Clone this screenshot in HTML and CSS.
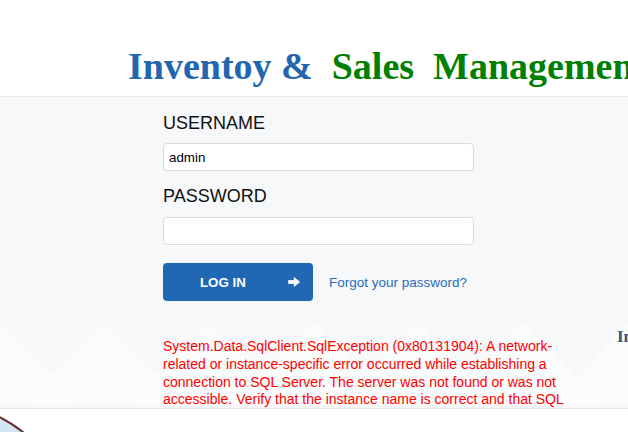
FILE: index.html
```html
<!DOCTYPE html>
<html lang="en">
<head>
<meta charset="utf-8">
<title>Inventoy &amp; Sales Management</title>
<link rel="stylesheet" href="styles.css">
</head>
<body>
<header class="site-header">
  <h1 class="site-title"><span class="title-blue">Inventoy &amp;</span><span class="title-green">Sales&nbsp; Management System</span></h1>
</header>
<main class="main">
  <section class="login-col">
    <form class="login-form">
      <label class="field-label" for="user">USERNAME</label>
      <input class="field-input" id="user" type="text" value="admin">
      <label class="field-label field-label-2" for="pass">PASSWORD</label>
      <input class="field-input" id="pass" type="password">
      <div class="actions">
        <button class="btn-login" type="button"><span>LOG IN</span>
          <svg class="btn-arrow" viewBox="0 0 12 10" width="12" height="10" aria-hidden="true"><path d="M0.5 3.6H6.2V0.6L11.6 5L6.2 9.4V6.4H0.5Z" fill="#fff" stroke="#fff" stroke-width="0.8" stroke-linejoin="round"/></svg>
        </button>
        <a class="forgot" href="#">Forgot your password?</a>
      </div>
    </form>
    <p class="error-msg">System.Data.SqlClient.SqlException (0x80131904): A network-related or instance-specific error occurred while establishing a connection to SQL Server. The server was not found or was not accessible. Verify that the instance name is correct and that SQL Server is configured to allow remote connections. (provider: Named Pipes Provider, error: 40 - Could not open a connection to SQL Server)</p>
  </section>
  <aside class="side-col">
    <p class="side-title">Inventory &amp; Sales Management</p>
  </aside>
</main>
<footer class="site-footer">
  <svg class="footer-logo" viewBox="0 0 40 24" width="40" height="24" aria-hidden="true">
    <path d="M0 9.5 Q11 15 23 24 L0 24 Z" fill="#d4e6f2"/>
    <path d="M-1 9 Q11 14.8 23.5 24.5" fill="none" stroke="#6a2b2b" stroke-width="2"/>
  </svg>
</footer>
</body>
</html>
```
FILE: styles.css
```css
html, body {
  margin: 0;
  padding: 0;
  overflow: hidden;
  height: 100%;
}
body {
  font-family: "Liberation Sans", Arial, sans-serif;
  background: #f7f8fa;
}
.site-header {
  box-sizing: border-box;
  height: 97px;
  padding: 45px 0 0 128px;
  background: #fff;
  border-bottom: 1px solid #e6e8eb;
  white-space: nowrap;
  overflow: hidden;
}
.site-title {
  margin: 0;
  font-family: "Liberation Serif", "Times New Roman", serif;
  font-weight: bold;
  font-size: 38px;
  line-height: 42px;
}
.title-blue { color: #2266b0; }
.title-green { color: #008000; margin-left: 19px; }

.main {
  display: flex;
  padding: 16px 0 0 163px;
  min-height: 400px;
  background-color: #f7f8fa;
  background-image: url("data:image/svg+xml,%3Csvg xmlns='http://www.w3.org/2000/svg' width='104.5' height='200' viewBox='0 0 104.5 200'%3E%3Cpath d='M0 0 L52.25 52 L104.5 0 L104.5 200 L0 200 Z' fill='%23fafbfb'/%3E%3Cpath d='M52.25 52 L104.5 104.25 L104.5 200 L0 200 L0 104.25 Z' fill='%23fbfcfb'/%3E%3C/svg%3E");
  background-repeat: repeat-x;
  background-position: 0.5px 226px;
}
.login-col {
  width: 410px;
  flex: 0 0 410px;
}
.login-form {
  display: flex;
  flex-direction: column;
  width: 311px;
}
.field-label {
  font-size: 18px;
  line-height: 21px;
  color: #111;
  margin-bottom: 9px;
}
.field-label-2 {
  margin-top: 15px;
  margin-bottom: 10px;
}
.field-input {
  box-sizing: border-box;
  height: 28px;
  width: 311px;
  margin: 0;
  padding: 0 5px;
  border: 1px solid #d9dcdf;
  border-radius: 4px;
  background: #fff;
  font-family: "Liberation Sans", Arial, sans-serif;
  font-size: 13.33px;
  color: #000;
  outline: none;
}
.actions {
  display: flex;
  align-items: center;
  margin-top: 18px;
}
.btn-login {
  box-sizing: border-box;
  width: 150px;
  height: 38px;
  display: flex;
  align-items: center;
  justify-content: space-between;
  padding: 0 13px 0 37px;
  border: none;
  border-radius: 4px;
  background: #2068b3;
  color: #fff;
  font-family: "Liberation Sans", Arial, sans-serif;
  font-weight: bold;
  font-size: 13.3px;
  cursor: pointer;
}
.btn-arrow { display: block; }
.forgot {
  margin-left: 16px;
  font-size: 13.5px;
  color: #2a6cb8;
  text-decoration: none;
}
.error-msg {
  margin: 37px 0 0;
  font-size: 14px;
  line-height: 17.75px;
  color: #ff0000;
}
.side-col {
  margin-left: 44px;
  padding-top: 214px;
  white-space: nowrap;
}
.side-title {
  margin: 0;
  font-family: "Liberation Serif", "Times New Roman", serif;
  font-weight: bold;
  font-size: 17px;
  line-height: 20px;
  color: #3e566e;
}
.site-footer {
  position: fixed;
  left: 0;
  right: 0;
  bottom: 0;
  height: 23px;
  background: #fff;
  border-top: 1px solid #e6e8eb;
  box-shadow: 0 -3px 4px rgba(0, 0, 0, 0.025);
}
.footer-logo {
  display: block;
  position: absolute;
  left: 0;
  bottom: 0;
}
```
